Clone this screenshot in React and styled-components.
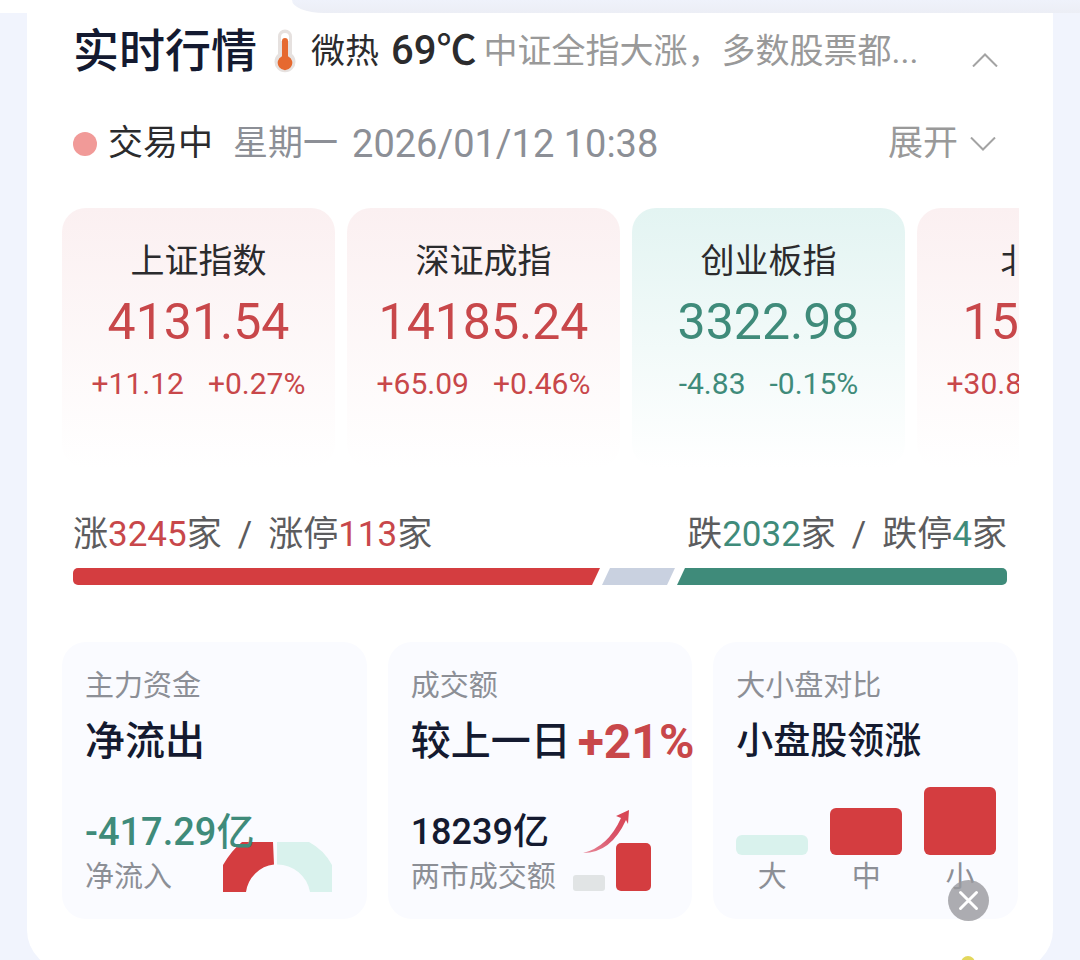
import React from "react";
import styled, { createGlobalStyle } from "styled-components";

const RED = "#d43d40";
const RED_TEXT = "#c8474a";
const GREEN = "#3f8b7a";

const Global = createGlobalStyle`
  * { box-sizing: border-box; }
  body { margin: 0; background: #f1f4fd; }
  h1, h2, p { margin: 0; font-weight: inherit; }
  button { border: 0; padding: 0; background: none; font: inherit; color: inherit; cursor: pointer; }
`;

const Page = styled.div`
  position: relative;
  height: 100vh;
  overflow: hidden;
  color: #2b2b2d;
  font-family: Roboto, "Noto Sans CJK SC", sans-serif;
`;

const TopStrip = styled.div`
  height: 13px;
  background: #fff;
  display: flex;
  justify-content: flex-end;
`;

const TabEdge = styled.div`
  width: 73%;
  background: linear-gradient(#eff2fb, #eceef5);
  border-bottom-left-radius: 32px 13px;
`;

const Panel = styled.main`
  margin: 0 27px;
  background: #fff;
  border-radius: 0 0 40px 40px;
  padding: 8px 34px 51px 35px;
`;

const Header = styled.header`
  display: flex;
  align-items: center;
  height: 60px;
  padding: 0 21px 0 11px;
  line-height: 60px;
  white-space: nowrap;
`;

const Title = styled.h1`
  font-size: 46px;
  font-weight: 500;
  color: #141a30;
`;

const Thermo = styled.svg`
  flex: none;
  margin: 0 15px 0 17px;
`;

const Mood = styled.span`
  font-size: 34px;
  margin-right: 12px;
`;

const Degree = styled.span`
  font-size: 40px;
  font-weight: 500;
  margin-right: 7px;
`;

const Summary = styled.p`
  font-size: 34px;
  color: #999;
  flex: 1;
`;

const IconButton = styled.button`
  display: flex;
  align-items: center;
  gap: 12px;
  font-size: 35px;
  line-height: 50px;
  color: #999;
`;

const CollapseButton = styled(IconButton)`
  align-self: flex-end;
  padding-bottom: 14px;
`;

const StatusRow = styled.div`
  display: flex;
  align-items: center;
  justify-content: space-between;
  height: 50px;
  margin-top: 38px;
  padding: 0 23px 0 11px;
`;

const Status = styled.div`
  display: flex;
  align-items: center;
  font-size: 35px;
  line-height: 50px;
`;

const Dot = styled.span`
  width: 24px;
  height: 24px;
  margin-right: 11px;
  border-radius: 50%;
  background: #f19a98;
`;

const DateText = styled.span`
  display: flex;
  align-items: center;
  gap: 14px;
  margin-left: 20px;
  color: #8c8f96;
`;

const Clock = styled.time`
  font-size: 38px;
`;

const IndexList = styled.section`
  display: flex;
  gap: 12px;
  margin-top: 39px;
  overflow: hidden;
`;

const IndexCard = styled.article`
  flex: none;
  width: 273px;
  height: 260px;
  padding-top: 30px;
  border-radius: 24px;
  text-align: center;
  color: ${(p) => (p.$up ? RED_TEXT : GREEN)};
  background: linear-gradient(${(p) => (p.$up ? "#fbf0f1" : "#e3f4f2")}, #fff);
`;

const IndexName = styled.h2`
  font-size: 34px;
  line-height: 46px;
  color: #2b2b2d;
`;

const IndexValue = styled.p`
  font-size: 50px;
  line-height: 76px;
`;

const IndexChange = styled.p`
  display: flex;
  justify-content: center;
  gap: 24px;
  margin-top: 4px;
  font-size: 30px;
  line-height: 40px;
`;

const Breadth = styled.section`
  margin-top: 42px;
  padding: 0 12px 0 11px;
`;

const BreadthText = styled.div`
  display: flex;
  justify-content: space-between;
  font-size: 35px;
  line-height: 50px;
  color: #5c5c5e;
`;

const BreadthGroup = styled.p`
  display: flex;
  gap: 16px;
`;

const Count = styled.span`
  color: ${(p) => (p.$up ? RED_TEXT : GREEN)};
`;

const Bar = styled.div`
  display: flex;
  gap: 2px;
  height: 17px;
  margin-top: 8px;
  border-radius: 5px;
  overflow: hidden;
`;

const RiseBar = styled.div`
  flex: 527;
  background: ${RED};
  clip-path: polygon(0 0, 100% 0, calc(100% - 8px) 100%, 0 100%);
`;

const FlatBar = styled.div`
  flex: 73;
  background: #c9d1e0;
  clip-path: polygon(8px 0, 100% 0, calc(100% - 8px) 100%, 0 100%);
`;

const FallBar = styled.div`
  flex: 330;
  background: ${GREEN};
  clip-path: polygon(8px 0, 100% 0, 100% 100%, 0 100%);
`;

const Stats = styled.section`
  display: grid;
  grid-template-columns: repeat(3, minmax(0, 1fr));
  gap: 21px;
  margin-top: 57px;
  padding-right: 1px;
`;

const StatCard = styled.article`
  display: flex;
  flex-direction: column;
  height: 277px;
  padding: 24px 22px 22px 23px;
  border-radius: 24px;
  background: #fafbff;
  white-space: nowrap;
`;

const Label = styled.p`
  font-size: 29px;
  line-height: 40px;
  color: #8c8f96;
`;

const Headline = styled.h2`
  display: flex;
  align-items: center;
  gap: 7px;
  margin-top: 6px;
  font-size: ${(p) => (p.$small ? 37 : 40)}px;
  line-height: 60px;
  font-weight: 500;
  color: #141a30;
`;

const Percent = styled.strong`
  font-size: 48px;
  font-weight: 700;
  color: ${RED_TEXT};
`;

const StatBody = styled.div`
  display: grid;
  align-items: end;
  margin-top: auto;
  > * { grid-area: 1 / 1; }
`;

const Figures = styled.div`
  position: relative;
  z-index: 1;
`;

const Amount = styled.p`
  font-size: ${(p) => (p.$down ? 38 : 36)}px;
  line-height: 50px;
  font-weight: 500;
  color: ${(p) => (p.$down ? GREEN : "#141a30")};
`;

const Gauge = styled.svg`
  justify-self: end;
  margin: 0 13px 5px 0;
`;

const Volume = styled.svg`
  justify-self: end;
  margin: 0 19px 5px 0;
`;

const Columns = styled.div`
  display: flex;
  justify-content: space-between;
  align-items: flex-end;
  margin-top: auto;
`;

const Column = styled.div`
  display: flex;
  flex-direction: column;
  align-items: center;
  gap: 2px;
`;

const Block = styled.div`
  width: 72px;
  border-radius: 6px;
  background: ${(p) => (p.$up ? RED : "#d9f2ed")};
`;

const Close = styled.button`
  position: absolute;
  right: 91px;
  top: 880px;
  width: 41px;
  height: 41px;
`;

const Floating = styled.span`
  position: absolute;
  right: 105px;
  top: 956px;
  width: 14px;
  height: 14px;
  border-radius: 50%;
  background: #e3d75c;
`;

const indices = [
  { name: "上证指数", value: "4131.54", diff: "+11.12", pct: "+0.27%", up: true },
  { name: "深证成指", value: "14185.24", diff: "+65.09", pct: "+0.46%", up: true },
  { name: "创业板指", value: "3322.98", diff: "-4.83", pct: "-0.15%", up: false },
  { name: "北证50", value: "1568.32", diff: "+30.85", pct: "+2.01%", up: true },
];

const sizes = [
  { name: "大", height: 20, up: false },
  { name: "中", height: 47, up: true },
  { name: "小", height: 68, up: true },
];

const Chevron = ({ up }) => (
  <svg width="26" height="14" viewBox="0 0 26 14" fill="none" stroke="#a3a3a3" strokeWidth="2" aria-hidden="true">
    <path d={up ? "M1 13.5 13 1.5 25 13.5" : "M1 .5 13 12.5 25 .5"} />
  </svg>
);

export default function App() {
  return (
    <Page>
      <Global />
      <TopStrip><TabEdge /></TopStrip>
      <Panel>
        <Header>
          <Title>实时行情</Title>
          <Thermo width="22" height="44" viewBox="0 0 22 44" aria-hidden="true">
            <path d="M4 7.5a7 7 0 0 1 14 0V25a10.500 10.500 0 1 1-14 0Z" fill="#e6e1df" />
            <path d="M7 8a4 4 0 0 1 8 0v4H7Z" fill="#fff" />
            <path d="M8 12a3 3 0 0 1 6 0V27.200a7.300 7.300 0 1 1-6 0Z" fill="#e6692f" />
          </Thermo>
          <Mood>微热</Mood>
          <Degree>69℃</Degree>
          <Summary>中证全指大涨，多数股票都...</Summary>
          <CollapseButton aria-label="收起"><Chevron up /></CollapseButton>
        </Header>

        <StatusRow>
          <Status>
            <Dot />
            <span>交易中</span>
            <DateText>
              <span>星期一</span>
              <Clock dateTime="2026-01-12T10:38">2026/01/12 10:38</Clock>
            </DateText>
          </Status>
          <IconButton>展开<Chevron /></IconButton>
        </StatusRow>

        <IndexList>
          {indices.map((i) => (
            <IndexCard key={i.name} $up={i.up}>
              <IndexName>{i.name}</IndexName>
              <IndexValue>{i.value}</IndexValue>
              <IndexChange><span>{i.diff}</span><span>{i.pct}</span></IndexChange>
            </IndexCard>
          ))}
        </IndexList>

        <Breadth>
          <BreadthText>
            <BreadthGroup>
              <span>涨<Count $up>3245</Count>家</span>
              <span>/</span>
              <span>涨停<Count $up>113</Count>家</span>
            </BreadthGroup>
            <BreadthGroup>
              <span>跌<Count>2032</Count>家</span>
              <span>/</span>
              <span>跌停<Count>4</Count>家</span>
            </BreadthGroup>
          </BreadthText>
          <Bar><RiseBar /><FlatBar /><FallBar /></Bar>
        </Breadth>

        <Stats>
          <StatCard>
            <Label>主力资金</Label>
            <Headline>净流出</Headline>
            <StatBody>
              <Gauge width="109" height="50" viewBox="0 0 109 50" aria-hidden="true">
                <path d="M0 50V23Q8 9 19 0H50L51 22.500A32 32 0 0 0 23 50Z" fill={RED} />
                <path d="M54 0H86Q101 8 109 23V50H87A33 33 0 0 0 54 22.500Z" fill="#d9f2ed" />
              </Gauge>
              <Figures>
                <Amount $down>-417.29亿</Amount>
                <Label>净流入</Label>
              </Figures>
            </StatBody>
          </StatCard>
          <StatCard>
            <Label>成交额</Label>
            <Headline>较上一日<Percent>+21%</Percent></Headline>
            <StatBody>
              <Volume width="78" height="82" viewBox="0 0 78 82" aria-hidden="true">
                <defs>
                  <linearGradient id="rise" x1="0" y1="1" x2="1" y2="0">
                    <stop offset="0" stopColor="#e88a9a" />
                    <stop offset=".5" stopColor="#d9546a" />
                    <stop offset="1" stopColor="#d84450" />
                  </linearGradient>
                </defs>
                <path d="M10 43Q35 37 48 8L43 6 56 0 55 14 53 10Q38 43 10 43Z" fill="url(#rise)" />
                <rect x="0" y="65" width="32" height="16" rx="3" fill="#e1e4e5" />
                <rect x="43" y="33" width="35" height="48" rx="5" fill={RED} />
              </Volume>
              <Figures>
                <Amount>18239亿</Amount>
                <Label>两市成交额</Label>
              </Figures>
            </StatBody>
          </StatCard>
          <StatCard>
            <Label>大小盘对比</Label>
            <Headline $small>小盘股领涨</Headline>
            <Columns>
              {sizes.map((s) => (
                <Column key={s.name}>
                  <Block $up={s.up} style={{ height: s.height }} />
                  <Label>{s.name}</Label>
                </Column>
              ))}
            </Columns>
          </StatCard>
        </Stats>
      </Panel>
      <Close aria-label="关闭">
        <svg width="41" height="41" viewBox="0 0 41 41" aria-hidden="true">
          <circle cx="20.500" cy="20.500" r="20.500" fill="#99999d" fillOpacity=".8" />
          <path d="m12.500 12.500 16 16M28.500 12.500l-16 16" stroke="#fff" strokeWidth="3" strokeLinecap="round" />
        </svg>
      </Close>
      <Floating />
    </Page>
  );
}
